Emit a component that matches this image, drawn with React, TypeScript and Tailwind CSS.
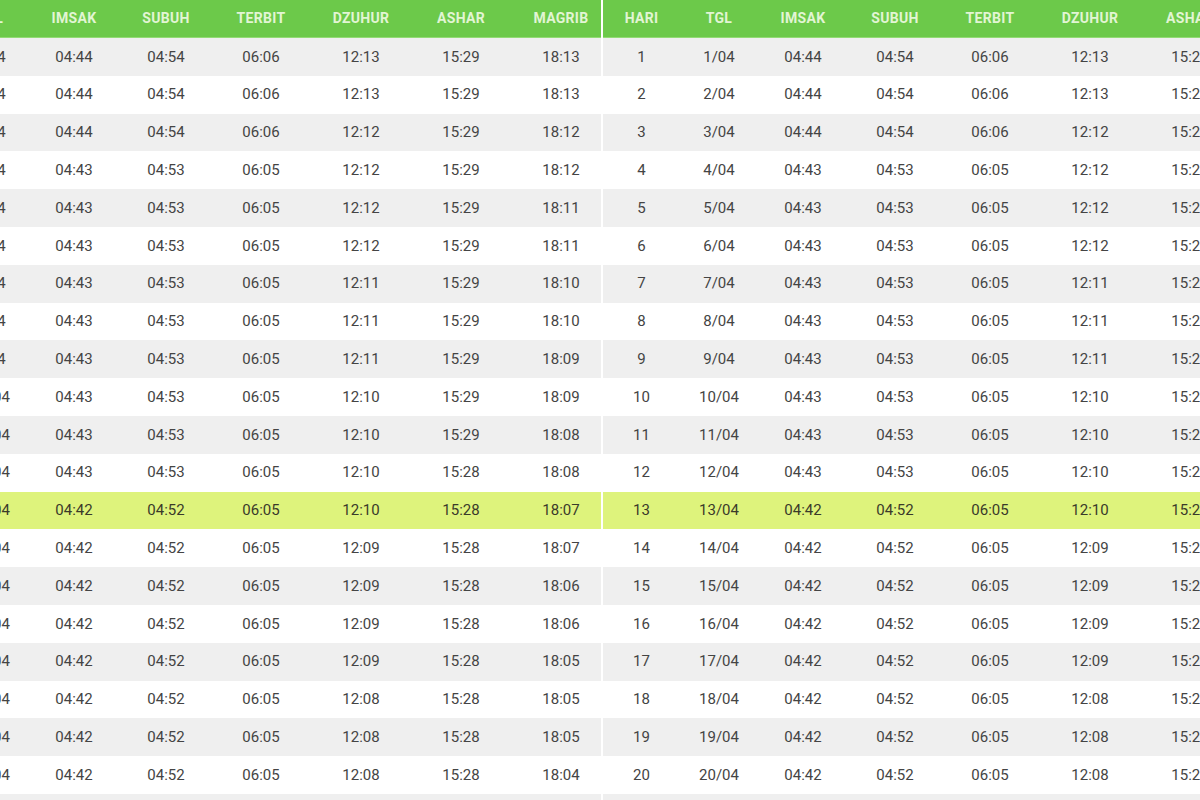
import React from "react";

const rows: string[][] = [
  ["04:44", "04:54", "06:06", "12:13", "15:29", "18:13"],
  ["04:44", "04:54", "06:06", "12:13", "15:29", "18:13"],
  ["04:44", "04:54", "06:06", "12:12", "15:29", "18:12"],
  ["04:43", "04:53", "06:05", "12:12", "15:29", "18:12"],
  ["04:43", "04:53", "06:05", "12:12", "15:29", "18:11"],
  ["04:43", "04:53", "06:05", "12:12", "15:29", "18:11"],
  ["04:43", "04:53", "06:05", "12:11", "15:29", "18:10"],
  ["04:43", "04:53", "06:05", "12:11", "15:29", "18:10"],
  ["04:43", "04:53", "06:05", "12:11", "15:29", "18:09"],
  ["04:43", "04:53", "06:05", "12:10", "15:29", "18:09"],
  ["04:43", "04:53", "06:05", "12:10", "15:29", "18:08"],
  ["04:43", "04:53", "06:05", "12:10", "15:28", "18:08"],
  ["04:42", "04:52", "06:05", "12:10", "15:28", "18:07"],
  ["04:42", "04:52", "06:05", "12:09", "15:28", "18:07"],
  ["04:42", "04:52", "06:05", "12:09", "15:28", "18:06"],
  ["04:42", "04:52", "06:05", "12:09", "15:28", "18:06"],
  ["04:42", "04:52", "06:05", "12:09", "15:28", "18:05"],
  ["04:42", "04:52", "06:05", "12:08", "15:28", "18:05"],
  ["04:42", "04:52", "06:05", "12:08", "15:28", "18:05"],
  ["04:42", "04:52", "06:05", "12:08", "15:28", "18:04"],
];

const headers = ["HARI", "TGL", "IMSAK", "SUBUH", "TERBIT", "DZUHUR", "ASHAR", "MAGRIB"];
const widths = ["w-[77px]", "w-[78px]", "w-[90px]", "w-[94px]", "w-[96px]", "w-[104px]", "w-[96px]", "w-[92px] pl-3"];

function Table({ className }: { className: string }) {
  return (
    <div className={`shrink-0 w-[727px] flex flex-col ${className}`}>
      <div className="flex h-[38px] shrink-0 bg-[#6cc94a] border-b border-[#92db74]">
        {headers.map((h, i) => (
          <div
            key={h}
            className={`${widths[i]} shrink-0 flex items-center justify-center text-[14px] font-bold tracking-[0.3px] text-[#e2f5d4]`}
          >
            {h}
          </div>
        ))}
      </div>
      {rows.map((r, idx) => {
        const day = idx + 1;
        const hl = day === 13;
        const bg = hl ? "bg-[#def37c]" : idx % 2 === 0 ? "bg-[#efefef]" : "bg-white";
        const cells = [String(day), `${day}/04`, ...r];
        return (
          <div key={idx} className={`flex h-[37.8px] shrink-0 ${bg}`}>
            {cells.map((c, i) => (
              <div
                key={i}
                className={`${widths[i]} shrink-0 flex items-center justify-center text-[15px] ${hl ? "text-[#3a3a2a]" : "text-[#444444]"}`}
              >
                {c}
              </div>
            ))}
          </div>
        );
      })}
      <div className="flex-1 bg-[#efefef]" />
    </div>
  );
}

export default function App() {
  return (
    <div
      className="w-[1200px] h-[800px] overflow-hidden bg-[#efefef] flex"
      style={{ fontFamily: "Roboto, 'Liberation Sans', sans-serif" }}
    >
      <Table className="ml-[-126px]" />
      <div className="w-[2px] shrink-0 bg-white" />
      <Table className="" />
    </div>
  );
}
